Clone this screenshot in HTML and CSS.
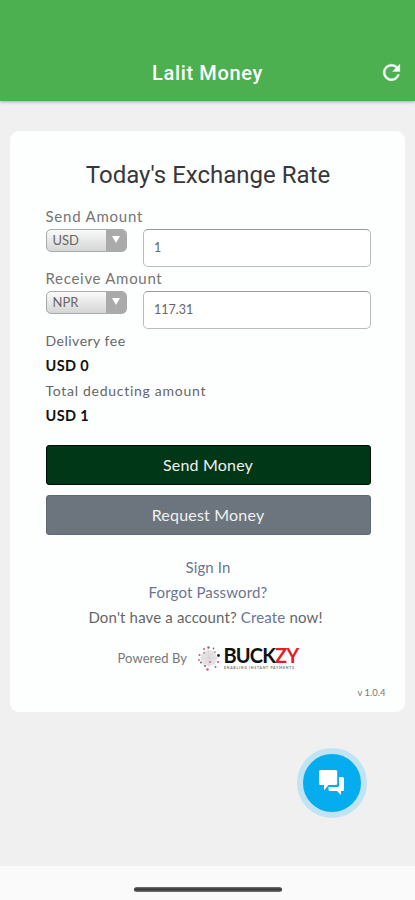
FILE: index.html
```html
<!DOCTYPE html>
<html lang="en">
<head>
<meta charset="utf-8">
<title>Lalit Money</title>
<link rel="stylesheet" href="styles.css">
</head>
<body>
<header class="appbar">
  <h1 class="appbar-title">Lalit Money</h1>
  <svg class="refresh" viewBox="0 0 24 24"><path d="M17.65 6.35A7.96 7.96 0 0 0 12 4a8 8 0 1 0 7.73 10h-2.08A6 6 0 1 1 12 6c1.66 0 3.14.69 4.22 1.78L13 11h7V4z"/></svg>
</header>
<main class="content">
  <section class="card">
    <h2 class="card-title">Today's Exchange Rate</h2>
    <div class="label">Send Amount</div>
    <div class="row">
      <div class="select"><span class="currency">USD</span><span class="arrow"></span></div>
      <div class="input">1</div>
    </div>
    <div class="label">Receive Amount</div>
    <div class="row">
      <div class="select"><span class="currency">NPR</span><span class="arrow"></span></div>
      <div class="input">117.31</div>
    </div>
    <div class="summary">
      <div class="line">Delivery fee</div>
      <div class="line strong">USD 0</div>
      <div class="line">Total deducting amount</div>
      <div class="line strong">USD 1</div>
    </div>
    <div class="button send">Send Money</div>
    <div class="button request">Request Money</div>
    <nav class="links">
      <a>Sign In</a>
      <a>Forgot Password?</a>
      <p class="create">Don't have a account? <a>Create</a> now!</p>
    </nav>
    <div class="powered">
      <span class="powered-text">Powered By</span>
      <svg class="burst" viewBox="0 0 24 28">
        <circle cx="12" cy="14" r="8" fill="#e4e4e5"/>
        <g fill="none" stroke="#cfcfd2" stroke-width=".6"><path d="M12 14 6 7M12 14 11 4M12 14l6-7M12 14h9M12 14l7 7M12 14v10M12 14l-6 7M12 14H3"/></g>
        <g fill="#777"><circle cx="11.500" cy="3.500" r="1.200"/><circle cx="16.500" cy="4.500" r=".9"/><circle cx="4" cy="18.500" r="1.100"/><circle cx="8" cy="22" r="1.100"/><circle cx="7" cy="9" r=".8"/></g>
        <circle cx="21.500" cy="11.500" r="1.400" fill="#222"/>
        <g fill="#e0526a"><circle cx="7" cy="5" r="1"/><circle cx="2.500" cy="11" r="1"/><circle cx="2" cy="16" r=".9"/><circle cx="10.500" cy="25.500" r="1.200"/><circle cx="18.500" cy="23" r="1"/><circle cx="21" cy="18" r="1"/><circle cx="18" cy="8" r=".8"/><circle cx="13" cy="18" r=".9"/></g>
      </svg>
      <div class="wordmark">
        <div class="brand">BUCK<span class="red">ZY</span></div>
        <svg class="tagline" viewBox="0 0 76 5"><text x="0" y="3.500" textLength="70" lengthAdjust="spacing">ENABLING INSTANT PAYMENTS</text></svg>
      </div>
    </div>
    <div class="version">v 1.0.4</div>
  </section>
  <div class="chat"><svg viewBox="0 0 26 26"><path d="M1.500 0h15.200a1.500 1.500 0 0 1 1.500 1.500v12a1.500 1.500 0 0 1-1.500 1.500H9.500L5 20.500V15H1.500A1.500 1.500 0 0 1 0 13.500v-12A1.500 1.500 0 0 1 1.500 0zM20 7h3.500A1.500 1.500 0 0 1 25 8.500v11a1.500 1.500 0 0 1-1.500 1.500H22v4l-4-4h-7a1.500 1.500 0 0 1-1.500-1.500V17h9a1.500 1.500 0 0 0 1.500-1.500z"/></svg></div>
</main>
<footer class="navbar"><div class="handle"></div></footer>
</body>
</html>
```

FILE: styles.css
```css
* { box-sizing: border-box; }
body {
  margin: 0;
  height: 900px;
  display: flex;
  flex-direction: column;
  background: #f0f0f0;
  font-family: Lato, "Liberation Sans", sans-serif;
  color: #666;
}
.appbar {
  position: relative;
  height: 100.500px;
  flex: none;
  padding-top: 46px;
  background: #4caf50;
  box-shadow: 0 1px 3px rgba(0, 0, 0, .3);
  text-align: center;
}
.appbar-title {
  margin: 0;
  font: 500 20px/54px Roboto, sans-serif;
  letter-spacing: .65px;
  color: #fff;
}
.refresh {
  position: absolute;
  right: 11px;
  top: 60px;
  width: 25px;
  height: 25px;
  fill: #fff;
  stroke: #fff;
  stroke-width: .3;
}
.content { flex: 1; padding: 30.500px 10px 0; }
.card {
  height: 581px;
  padding: 30px 34.500px 0 35.500px;
  border-radius: 9px;
  background: #fdfefe;
}
.card-title {
  margin: 0 0 15.500px;
  font: 400 24px/29px Roboto, sans-serif;
  text-align: center;
  color: #383838;
}
.label { height: 22px; font-size: 15px; line-height: 21px; color: #757575; letter-spacing: .78px; }
.label + .row + .label { letter-spacing: .7px; }
.row { display: flex; height: 40px; gap: 16px; align-items: flex-start; padding-top: 1px; }
.select {
  display: flex;
  width: 81.500px;
  height: 23px;
  border: 1px solid #aaa;
  border-radius: 5px;
  overflow: hidden;
  background: linear-gradient(#fafafa, #d5d5d5);
}
.currency { flex: 1; padding-left: 6px; font-size: 13px; line-height: 20px; color: #666; }
.arrow { display: flex; width: 20.500px; justify-content: center; padding-top: 6px; background: #aaa; }
.arrow::before {
  content: "";
  width: 0;
  height: 0;
  border: 4px solid transparent;
  border-top: 7px solid #fff;
  border-bottom: 0;
}
.input {
  flex: 1;
  height: 38.500px;
  padding-left: 10px;
  border: 1px solid #bbb;
  border-top-color: #999;
  border-radius: 5px;
  background: #fff;
  font-size: 12.500px;
  line-height: 36px;
}
.summary { margin-top: -1.500px; }
.line { height: 25px; font-size: 14px; line-height: 25px; letter-spacing: .72px; }
.line:first-child { letter-spacing: .5px; }
.line.strong { font-weight: 700; font-size: 14.500px; letter-spacing: .4px; color: #111; }
.button {
  height: 40px;
  border-radius: 3px;
  font-size: 16px;
  letter-spacing: .2px;
  text-align: center;
  color: #f0f0f0;
}
.send { margin-top: 16.500px; border: 1px solid #001006; background: #003716; line-height: 37px; }
.request { margin-top: 10px; border: 1px solid #606970; background: #6c757d; line-height: 38px; }
.links { margin-top: 20px; text-align: center; font-size: 15px; line-height: 25px; letter-spacing: .15px; }
.links a { color: #6c7590; }
.links > a { display: block; }
.create { margin: 0; padding-right: 5px; white-space: nowrap; }
.powered { display: flex; align-items: center; margin: 14px 0 0 72px; height: 28px; }
.powered-text { width: 79px; font-size: 13px; letter-spacing: .1px; color: #777; white-space: nowrap; }
.burst { width: 24px; height: 28px; }
.wordmark { width: 80px; margin-left: 3px; }
.brand { height: 19px; font: 700 20px/19px Lato, sans-serif; letter-spacing: -.85px; color: #111; white-space: nowrap; }
.red { color: #e01f26; }
.tagline { display: block; width: 76px; height: 5px; font: 700 3.500px Lato, sans-serif; fill: #777; }
.version { margin: 13.500px -15px 0 0; font-size: 9.500px; line-height: 16px; text-align: right; color: #777; }
.chat {
  display: flex;
  width: 70px;
  height: 70px;
  margin: 36px 0 0 287px;
  align-items: center;
  justify-content: center;
  border: 6px solid #c0e4f3;
  border-radius: 50%;
  background: #05adee;
}
.chat svg { width: 26px; height: 26px; fill: #fff; }
.navbar { flex: none; height: 34px; padding-top: 21px; background: #fafafa; }
.handle { width: 148px; height: 5px; margin-left: 134px; border-radius: 3px; background: linear-gradient(#777, #333 45%, #777); }
```
